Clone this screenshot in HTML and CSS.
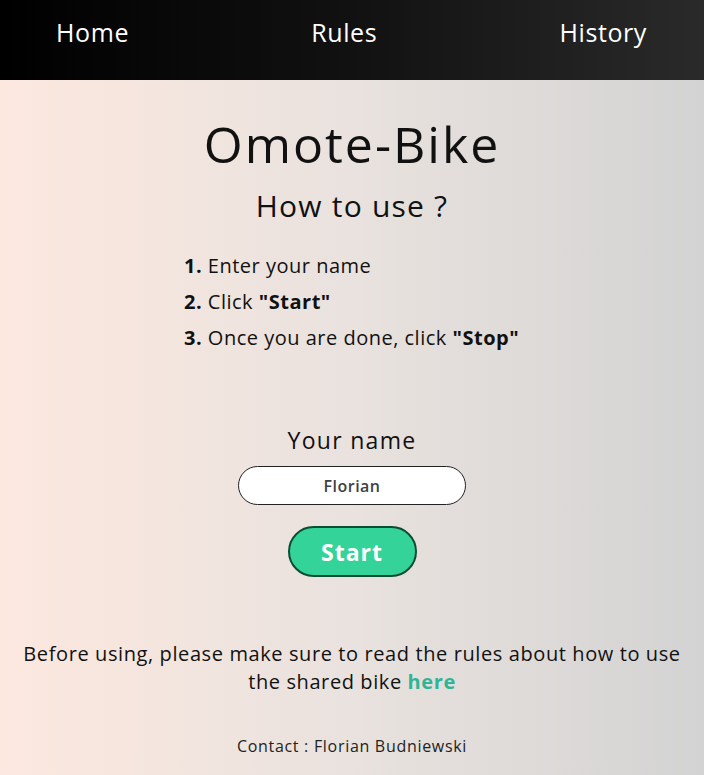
FILE: index.html
```html
<!DOCTYPE html>
<html lang="en">
<head>
<meta charset="utf-8">
<title>Omote-Bike</title>
<link rel="stylesheet" href="styles.css">
</head>
<body>
<header class="topbar">
  <nav class="nav">
    <a class="nav-link" href="#">Home</a>
    <a class="nav-link" href="#">Rules</a>
    <a class="nav-link" href="#">History</a>
  </nav>
</header>
<main class="page">
  <h1 class="title">Omote-Bike</h1>
  <h2 class="subtitle">How to use ?</h2>
  <ol class="steps">
    <li><b>1.</b> Enter your name</li>
    <li><b>2.</b> Click <b>"Start"</b></li>
    <li><b>3.</b> Once you are done, click <b>"Stop"</b></li>
  </ol>
  <form class="form">
    <label class="label" for="name">Your name</label>
    <input class="name-input" id="name" type="text" value="Florian">
    <button class="start-btn" type="button">Start</button>
  </form>
  <p class="notice">Before using, please make sure to read the rules about how to use the shared bike <a class="link" href="#">here</a></p>
  <p class="contact">Contact : Florian Budniewski</p>
</main>
</body>
</html>
```

FILE: styles.css
```css
html, body {
  margin: 0;
  padding: 0;
}
body {
  font-family: "Open Sans", "Liberation Sans", sans-serif;
  color: #111;
  background: linear-gradient(90deg, #fce8df 0%, #e9e2de 50%, #d3d3d3 100%);
  min-height: 775px;
}
.topbar {
  height: 80px;
  background: linear-gradient(90deg, #000 0%, #111 50%, #2a2a2a 100%);
}
.nav {
  display: flex;
  justify-content: space-between;
  padding: 0 57px 0 56px;
  height: 64px;
  align-items: center;
}
.nav-link {
  color: #fff;
  text-decoration: none;
  font-size: 25px;
  font-weight: 400;
  letter-spacing: 0.6px;
}
.page {
  text-align: center;
  padding-top: 34px;
}
.title {
  font-size: 50px;
  font-weight: 400;
  margin: 0;
  line-height: 60px;
  letter-spacing: 2px;
}
.subtitle {
  font-size: 30px;
  font-weight: 400;
  margin: 12px 0 0;
  line-height: 40px;
  letter-spacing: 1.2px;
}
.steps {
  list-style: none;
  text-align: left;
  margin: 22px 0 0 184px;
  padding: 0;
  font-size: 20px;
  line-height: 36px;
  letter-spacing: 0.5px;
}
.steps b {
  font-weight: 700;
}
.form {
  display: flex;
  flex-direction: column;
  align-items: center;
  margin-top: 68px;
}
.label {
  font-size: 23px;
  line-height: 32px;
  letter-spacing: 1.3px;
}
.name-input {
  margin-top: 10px;
  width: 228px;
  height: 39px;
  box-sizing: border-box;
  border: 1px solid #222;
  border-radius: 20px;
  background: #fff;
  text-align: center;
  font-family: inherit;
  font-size: 16px;
  font-weight: 600;
  letter-spacing: 0.5px;
  color: #3f3f46;
  outline: none;
}
.start-btn {
  margin-top: 21px;
  width: 129px;
  height: 51px;
  box-sizing: border-box;
  border: 2px solid #0b4d33;
  border-radius: 26px;
  background: #34d399;
  color: #fff;
  font-family: inherit;
  font-size: 23px;
  font-weight: 700;
  letter-spacing: 1px;
}
.notice {
  margin: 63px 12px 0;
  font-size: 20px;
  line-height: 28px;
  letter-spacing: 0.6px;
  color: #111;
}
.link {
  color: #2eb596;
  font-weight: 700;
  text-decoration: none;
}
.contact {
  margin: 38px 0 0;
  font-size: 16px;
  line-height: 24px;
  letter-spacing: 0.7px;
  color: #222;
}
```
